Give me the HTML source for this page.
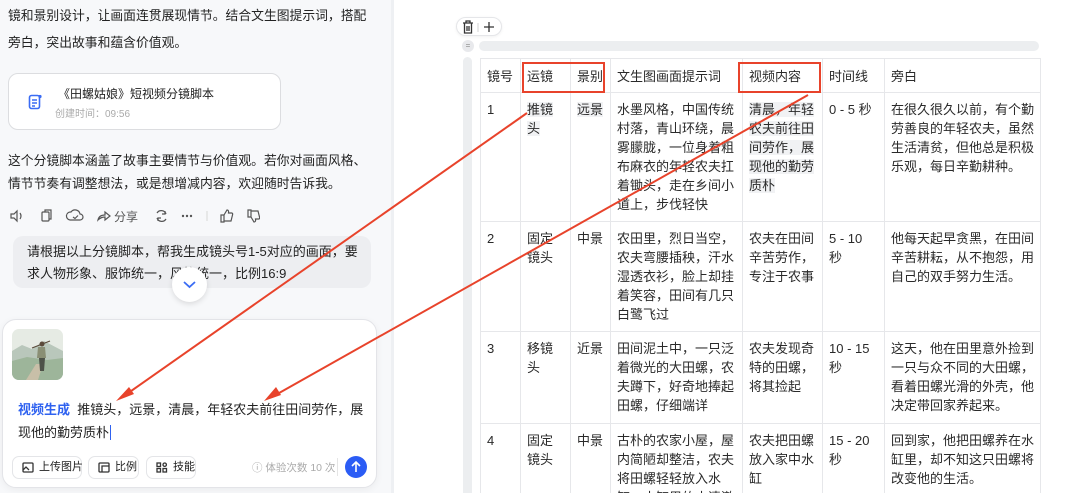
<!DOCTYPE html>
<html><head><meta charset="utf-8">
<style>
*{margin:0;padding:0;box-sizing:border-box}
html,body{width:1080px;height:493px;overflow:hidden}
body{position:relative;background:#fff;font-family:"Liberation Sans","Noto Sans CJK SC",sans-serif;color:#222}
.wrap{position:absolute;left:0;top:0;width:1080px;height:493px;overflow:hidden}
.left{position:absolute;left:0;top:0;width:394px;height:493px;background:#f7f8fa;border-right:3px solid #eef0f3}
.p{position:absolute;left:8px;font-size:12.8px;line-height:27px;color:#222;white-space:nowrap}
.card{position:absolute;left:8px;top:73px;width:273px;height:57px;border:1px solid #dcdde0;border-radius:10px;background:#fff}
.ic{position:absolute;top:209px;font-size:12px;color:#555}
.bubble{position:absolute;left:13px;top:236px;width:358px;height:52px;background:#edeef1;border-radius:10px;padding:5px 6px 5px 14px;font-size:13px;line-height:22px;color:#222}
.down{position:absolute;left:172px;top:267px;width:35px;height:35px;border-radius:50%;background:#fff;box-shadow:0 2px 6px rgba(0,0,0,.12)}
.input{position:absolute;left:2px;top:319px;width:375px;height:169px;background:#fff;border:1px solid #e3e4e8;border-radius:14px;box-shadow:0 2px 8px rgba(0,0,0,.05)}
.btn{position:absolute;top:456px;height:23px;border:1px solid #e4e5e8;border-radius:7px;background:#fff;font-size:11px;line-height:21px;color:#222;padding-left:26px;white-space:nowrap}
table{position:absolute;left:480px;top:58px;width:560px;border-collapse:collapse;table-layout:fixed;font-size:13px;line-height:19px;color:#2a2a2a}
td{border:1px solid #e6e7ea;vertical-align:top;padding:7px 6px;word-break:break-all}
tr.h td{height:34px;padding:8px 6px 6px;white-space:nowrap}
.hl{background:#f1f2f4}
</style></head><body>
<div class="wrap">
<div class="left">
  <div class="p" style="top:2px">镜和景别设计，让画面连贯展现情节。结合文生图提示词，搭配</div>
  <div class="p" style="top:29px">旁白，突出故事和蕴含价值观。</div>
  <div class="card">
    <svg style="position:absolute;left:19px;top:20px" width="14" height="16" viewBox="0 0 14 16"><rect x="1.5" y="1.5" width="10" height="13" rx="2" fill="none" stroke="#3a6cf4" stroke-width="1.6"/><path d="M4 6h5M4 9h5M4 12h3" stroke="#3a6cf4" stroke-width="1.4"/><circle cx="12" cy="2.5" r="1.6" fill="#3a6cf4"/></svg>
    <div style="position:absolute;left:49px;top:11px;font-size:12px;color:#222;white-space:nowrap">《田螺姑娘》短视频分镜脚本</div>
    <div style="position:absolute;left:46px;top:31px;font-size:10px;color:#aaa;white-space:nowrap">创建时间：09:56</div>
  </div>
  <div class="p" style="top:147px">这个分镜脚本涵盖了故事主要情节与价值观。若你对画面风格、</div>
  <div class="p" style="top:170px">情节节奏有调整想法，或是想增减内容，欢迎随时告诉我。</div>
  <svg class="ic" style="left:10px" width="250" height="14" viewBox="0 0 250 14" fill="none" stroke="#555" stroke-width="1.2">
    <path d="M1 5h3l3-3v10l-3-3H1z"/><path d="M10 4q2 3 0 6"/>
    <rect x="32" y="3" width="7" height="9" rx="1"/><path d="M35 3V1h6v9h-2"/>
    <path d="M60 11a4 4 0 0 1 1-8 5 5 0 0 1 9 2 3 3 0 0 1 0 6z"/><path d="M63 8l2 1.5 3-3"/>
    <path d="M88 11q1-5 7-5V3l5 4-5 4V8q-4 0-7 3z"/>
    <path d="M147 4a5 5 0 0 1 9 1M156 10a5 5 0 0 1-9-1M155 2v3h-3M148 12V9h3"/>
    <circle cx="173" cy="7" r=".6"/><circle cx="177" cy="7" r=".6"/><circle cx="181" cy="7" r=".6"/>
    <path d="M197 2v10" stroke="#ddd"/>
    <path d="M211 6h3v7h-3zM214 6l3-5q2 0 1.5 3H222q1 .5.5 2l-1.5 6h-7"/>
    <path d="M238 8h3V1h-3zM241 8l3 5q2 0 1.5-3H249q1-.5.5-2L248 2h-7"/>
  </svg>
  <div style="position:absolute;left:114px;top:208px;font-size:12px;color:#555">分享</div>
  <div class="bubble">请根据以上分镜脚本，帮我生成镜头号1-5对应的画面，要求人物形象、服饰统一，风格统一，比例16:9</div>
  <div class="down"><svg width="35" height="35" viewBox="0 0 35 35"><path d="M12 15l5.5 5 5.5-5" fill="none" stroke="#3a6cf4" stroke-width="1.8"/></svg></div>
  <div class="input">
    <svg style="position:absolute;left:9px;top:9px;border-radius:7px" width="51" height="51" viewBox="0 0 51 51">
      <rect width="51" height="51" fill="#e6ebe4"/>
      <path d="M0 22l10-6 10 4 12-8 19 10v29H0z" fill="#b9c7bb"/>
      <path d="M0 32l15-4 20 3 16-2v22H0z" fill="#9db59a"/>
      <path d="M14 51l10-16 7 0-5 16z" fill="#c8bfa8"/>
      <circle cx="30" cy="15" r="2.5" fill="#5c4a3a"/>
      <path d="M26 18h7l1 11h-9z" fill="#8a8f75"/>
      <path d="M27 29h6l-1 13h-4z" fill="#4d5248"/>
      <path d="M20 19l18-7" stroke="#5a4a3a" stroke-width="1.2"/>
    </svg>
    <div style="position:absolute;left:15px;top:78px;font-size:13px;line-height:23px;color:#222;width:358px"><span style="color:#2f62f0;font-weight:bold">视频生成</span>&nbsp; 推镜头，远景，清晨，年轻农夫前往田间劳作，展现他的勤劳质朴<span style="border-left:1.5px solid #2f62f0;margin-left:1px"></span></div>
  </div>
  <div class="btn" style="left:12px;width:70px"><svg style="position:absolute;left:9px;top:5px" width="12" height="11" viewBox="0 0 12 11" fill="none" stroke="#333" stroke-width="1.3"><rect x="1" y="1" width="10" height="9" rx="1"/><path d="M1 8l3-3 3 3"/></svg>上传图片</div>
  <div class="btn" style="left:88px;width:51px"><svg style="position:absolute;left:9px;top:5px" width="12" height="11" viewBox="0 0 12 11" fill="none" stroke="#333" stroke-width="1.3"><rect x="1" y="1" width="10" height="9" rx="1"/><path d="M4 10V4h7"/></svg>比例</div>
  <div class="btn" style="left:146px;width:50px"><svg style="position:absolute;left:9px;top:5px" width="12" height="11" viewBox="0 0 12 11" fill="none" stroke="#333" stroke-width="1.3"><rect x="1" y="1" width="3.5" height="3.5"/><rect x="1" y="6.5" width="3.5" height="3.5"/><rect x="7" y="6.5" width="3.5" height="3.5"/><circle cx="8.7" cy="2.7" r="1.7"/></svg>技能</div>
  <div style="position:absolute;left:252px;top:460px;font-size:10.5px;color:#aaa;white-space:nowrap">ⓘ 体验次数 10 次</div>
  <div style="position:absolute;left:337px;top:458px;width:1px;height:18px;background:#e5e5e5"></div>
  <div style="position:absolute;left:345px;top:456px;width:22px;height:22px;border-radius:50%;background:#2b5cf5"><svg width="22" height="22" viewBox="0 0 22 22"><path d="M11 16V6M7 10l4-4 4 4" fill="none" stroke="#fff" stroke-width="1.6"/></svg></div>
</div>

<div style="position:absolute;left:456px;top:17px;width:46px;height:19px;border:1px solid #e5e6e9;border-radius:10px;background:#fff;box-shadow:0 1px 3px rgba(0,0,0,.06)">
  <svg width="46" height="19" viewBox="0 0 46 19" fill="none" stroke="#333" stroke-width="1.3"><path d="M6 5h10M9 5V3h4v2M7.5 5v10h7V5M10 8v5M12 8v5"/><path d="M21 5v9" stroke="#ddd"/><path d="M32 4v10M27 9h10"/></svg>
</div>
<div style="position:absolute;left:462px;top:40px;width:12px;height:12px;border-radius:50%;background:#e8e9ec;font-size:8px;line-height:12px;text-align:center;color:#888">=</div>
<div style="position:absolute;left:479px;top:41px;width:560px;height:10px;border-radius:5px;background:#eceef0"></div>
<div style="position:absolute;left:463px;top:57px;width:9px;height:440px;border-radius:5px;background:#eceef0"></div>

<table>
<colgroup><col style="width:40px"><col style="width:50px"><col style="width:40px"><col style="width:132px"><col style="width:80px"><col style="width:62px"><col style="width:156px"></colgroup>
<tr class="h"><td>镜号</td><td>运镜</td><td>景别</td><td>文生图画面提示词</td><td>视频内容</td><td>时间线</td><td>旁白</td></tr>
<tr style="height:128px"><td>1</td><td><span class="hl">推镜头</span></td><td><span class="hl">远景</span></td><td>水墨风格，中国传统村落，青山环绕，晨雾朦胧，一位身着粗布麻衣的年轻农夫扛着锄头，走在乡间小道上，步伐轻快</td><td><span class="hl">清晨，年轻农夫前往田间劳作，展现他的勤劳质朴</span></td><td>0 - 5 秒</td><td>在很久很久以前，有个勤劳善良的年轻农夫，虽然生活清贫，但他总是积极乐观，每日辛勤耕种。</td></tr>
<tr style="height:110px"><td>2</td><td>固定镜头</td><td>中景</td><td>农田里，烈日当空，农夫弯腰插秧，汗水湿透衣衫，脸上却挂着笑容，田间有几只白鹭飞过</td><td>农夫在田间辛苦劳作，专注于农事</td><td>5 - 10 秒</td><td>他每天起早贪黑，在田间辛苦耕耘，从不抱怨，用自己的双手努力生活。</td></tr>
<tr style="height:92px"><td>3</td><td>移镜头</td><td>近景</td><td>田间泥土中，一只泛着微光的大田螺，农夫蹲下，好奇地捧起田螺，仔细端详</td><td>农夫发现奇特的田螺，将其捡起</td><td>10 - 15 秒</td><td>这天，他在田里意外捡到一只与众不同的大田螺，看着田螺光滑的外壳，他决定带回家养起来。</td></tr>
<tr style="height:100px"><td>4</td><td>固定镜头</td><td>中景</td><td>古朴的农家小屋，屋内简陋却整洁，农夫将田螺轻轻放入水缸，水缸里的水清澈</td><td>农夫把田螺放入家中水缸</td><td>15 - 20 秒</td><td>回到家，他把田螺养在水缸里，却不知这只田螺将改变他的生活。</td></tr>
</table>

<svg style="position:absolute;left:0;top:0" width="1080" height="493" viewBox="0 0 1080 493">
  <g fill="none" stroke="#e8432b" stroke-width="2">
    <rect x="523" y="63" width="81" height="29"/>
    <rect x="739" y="63" width="81" height="29"/>
    <path d="M527 113L124 396"/>
    <path d="M808 95L272 397"/>
  </g>
  <path d="M116 401l13-14 5 7z" fill="#e8432b"/>
  <path d="M264 401l12-14 5 8z" fill="#e8432b"/>
</svg>
</div>
</body></html>
